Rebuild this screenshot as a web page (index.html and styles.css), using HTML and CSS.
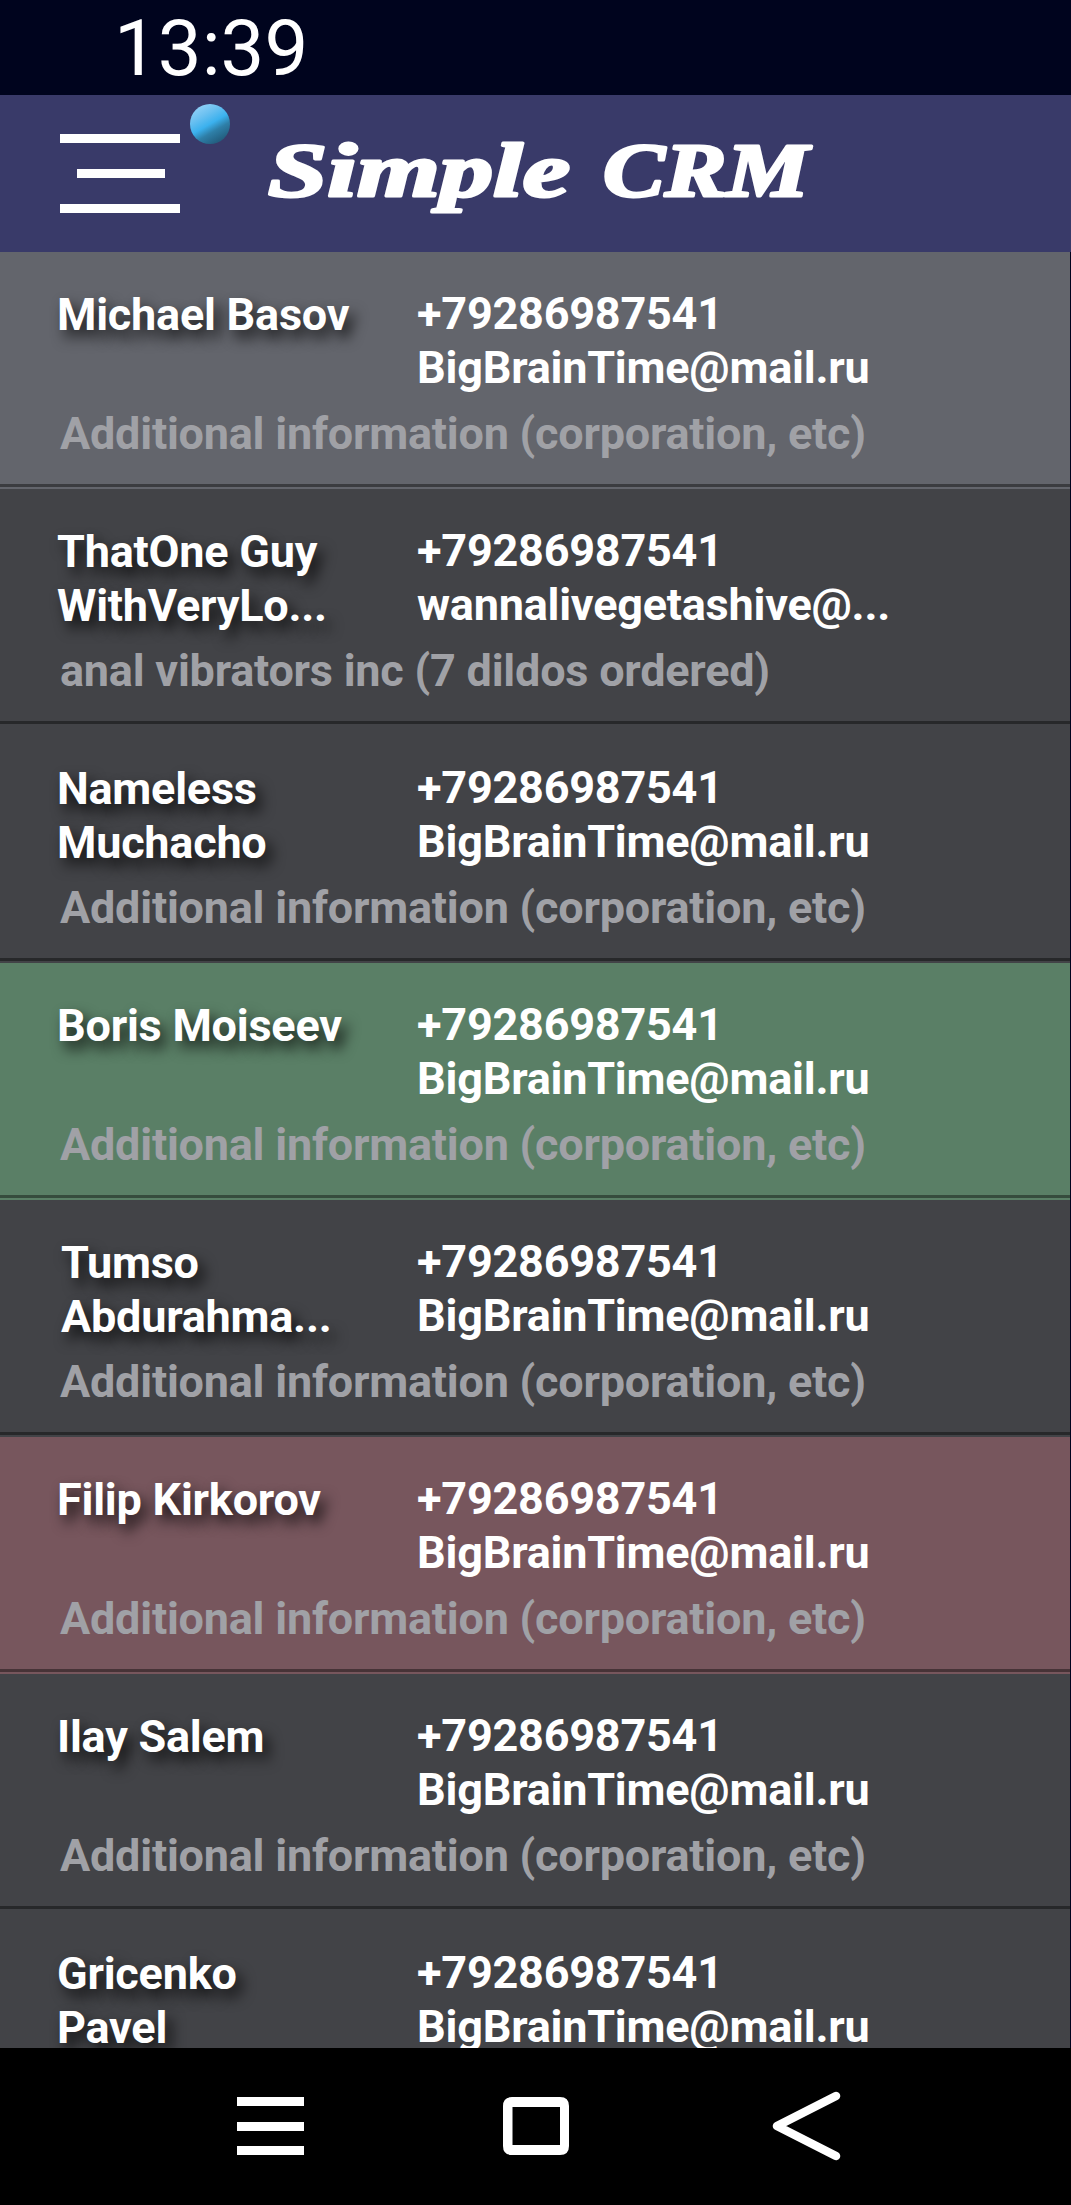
FILE: index.html
```html
<!DOCTYPE html>
<html lang="en">
<head>
<meta charset="utf-8">
<title>Simple CRM</title>
<link rel="stylesheet" href="styles.css">
</head>
<body>
<div class="phone">
  <div class="status"><time>13:39</time></div>
  <header class="header">
    <button class="menu" aria-label="Menu"><span></span><span class="short"></span><span></span><i class="ball"></i></button>
    <svg class="logo" width="560" height="100" viewBox="0 0 560 100">
      <text x="4" y="73" textLength="302" lengthAdjust="spacingAndGlyphs">Simple</text>
      <text x="339" y="73" textLength="206" lengthAdjust="spacingAndGlyphs">CRM</text>
    </svg>
  </header>
  <main class="list">
    <article class="row light"><h2>Michael Basov</h2><div class="contact">+79286987541<br>BigBrainTime@mail.ru</div><p>Additional information (corporation, etc)</p></article>
    <article class="row"><h2>ThatOne Guy<br>WithVeryLo...</h2><div class="contact">+79286987541<br>wannalivegetashive@...</div><p>anal vibrators inc (7 dildos ordered)</p></article>
    <article class="row"><h2>Nameless<br>Muchacho</h2><div class="contact">+79286987541<br>BigBrainTime@mail.ru</div><p>Additional information (corporation, etc)</p></article>
    <article class="row green"><h2>Boris Moiseev</h2><div class="contact">+79286987541<br>BigBrainTime@mail.ru</div><p>Additional information (corporation, etc)</p></article>
    <article class="row inset"><h2>Tumso<br>Abdurahma...</h2><div class="contact">+79286987541<br>BigBrainTime@mail.ru</div><p>Additional information (corporation, etc)</p></article>
    <article class="row red"><h2>Filip Kirkorov</h2><div class="contact">+79286987541<br>BigBrainTime@mail.ru</div><p>Additional information (corporation, etc)</p></article>
    <article class="row"><h2>Ilay Salem</h2><div class="contact">+79286987541<br>BigBrainTime@mail.ru</div><p>Additional information (corporation, etc)</p></article>
    <article class="row last"><h2>Gricenko<br>Pavel</h2><div class="contact">+79286987541<br>BigBrainTime@mail.ru</div></article>
  </main>
  <nav class="nav">
    <svg width="68" height="70" viewBox="0 0 68 70"><path d="M0 6h67v9H0zM0 31h67v9H0zM0 55h67v9H0z" fill="#fff"/></svg>
    <svg width="68" height="70" viewBox="0 0 68 70"><path fill="#fff" fill-rule="evenodd" d="M9 6h48q9 0 9 9v40q0 9-9 9H9q-9 0-9-9V15Q0 6 9 6zM9.500 16v38h47.500V16z"/></svg>
    <svg width="72" height="70" viewBox="0 0 72 70"><path d="M67 5 8 35 67 65" fill="none" stroke="#fff" stroke-width="8.500" stroke-linecap="round" stroke-linejoin="round"/></svg>
  </nav>
</div>
</body>
</html>
```
FILE: styles.css
```css
* { box-sizing: border-box; }
body { margin: 0; background: #00041e; font-family: Roboto, sans-serif; color: #fff; }
.phone { width: 1071px; height: 2205px; display: flex; flex-direction: column; overflow: hidden; }
.status { height: 95px; flex: none; padding-left: 114px; font-size: 78px; line-height: 98px; }
.header { height: 157px; flex: none; display: flex; background: #393a69; padding-left: 60px; }
.menu { position: relative; width: 120px; margin: 39px 0 0; padding: 0; border: 0; background: none; display: flex; flex-direction: column; align-items: center; gap: 26px; }
.menu span { width: 120px; height: 9px; background: #fff; }
.menu .short { width: 88px; margin-left: 2px; }
.ball { position: absolute; left: 130px; top: -30px; width: 40px; height: 40px; border-radius: 50%; background: linear-gradient(150deg, #88cdf6 15%, #6cc1f1 30%, #3bb1ee 50%, #2e7fa8 65%, #235f80 85%); }
.logo { margin: 28px 0 0 84px; }
.logo text { font: italic 700 77px "Liberation Serif", serif; fill: #fff; stroke: #fff; stroke-width: 3px; stroke-linejoin: round; }
.list { flex: 1; min-height: 0; overflow: hidden; margin-right: 1px; }
.row { height: 237px; display: grid; grid-template-columns: 360px 1fr; grid-template-rows: 142px 54px; row-gap: 12px; position: relative; padding-left: 57px; background: #424347; font-size: 45px; font-weight: 700; letter-spacing: -.23px; line-height: 54px; white-space: nowrap; }
.row::after { content: ""; position: absolute; left: 0; right: 0; bottom: 2px; height: 3px; background: rgba(0, 0, 0, .4); }
.row h2 { margin: 0; padding-top: 36px; font: inherit; text-shadow: 6px 8px 14px rgba(0, 0, 0, .8); }
.contact { padding-top: 35px; }
.row p { grid-column: 1 / -1; margin: 1px 0 0 3px; color: #a0a1a6; }
.light { background: #63656c; }
.green { background: #5a7f66; }
.red { background: #77565d; }
.inset h2 { padding-left: 4px; }
.nav { height: 157px; flex: none; background: #000; display: flex; gap: 198px; padding: 43px 0 0 237px; }
.nav svg { flex: none; }
```
